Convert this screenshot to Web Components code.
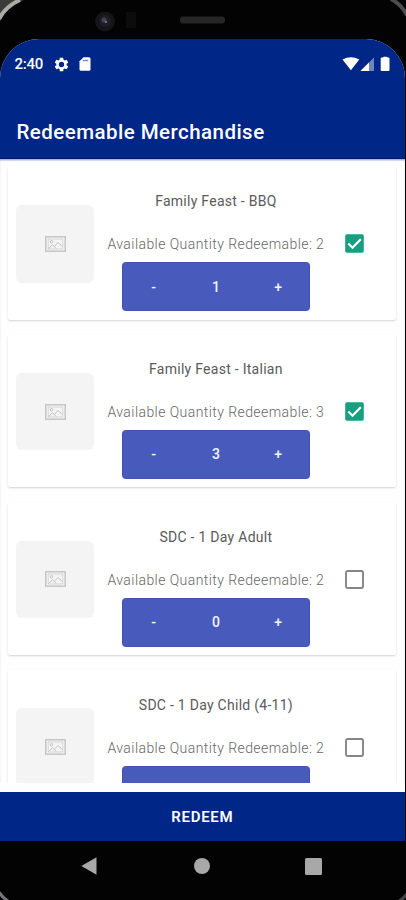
<!DOCTYPE html>
<html lang="en">
<head>
<meta charset="utf-8">
<title>Redeemable Merchandise</title>
<style>
html,body{margin:0;height:100%;background:#030304;overflow:hidden}
body{font-family:Roboto,"Noto Sans",sans-serif}
</style>
</head>
<body>
<phone-shell>
  <status-bar time="2:40"></status-bar>
  <app-header>Redeemable Merchandise</app-header>
  <merch-list>
    <merch-card available="2" count="1" checked>Family Feast - BBQ</merch-card>
    <merch-card available="3" count="3" checked>Family Feast - Italian</merch-card>
    <merch-card available="2" count="0">SDC - 1 Day Adult</merch-card>
    <merch-card available="2">SDC - 1 Day Child (4-11)</merch-card>
  </merch-list>
  <redeem-button>REDEEM</redeem-button>
  <nav-bar slot="nav"></nav-bar>
</phone-shell>
<script>
function define(name, render) {
  customElements.define(name, class extends HTMLElement {
    connectedCallback() {
      if (this.shadowRoot) return;
      this.attachShadow({mode: 'open'}).innerHTML = render(this);
    }
  });
}

define('phone-shell', () => `
<style>
:host{display:flex;flex-direction:column;position:relative;width:406px;height:900px;background:#030304;overflow:hidden}
.bezel{height:38.5px;flex:none;box-sizing:border-box}
.screen{width:404.7px;height:802.5px;flex:none;display:flex;flex-direction:column;background:#fefefe;border-radius:39px 39px 0 0;overflow:hidden}
svg{position:absolute;left:0;top:0;pointer-events:none}
</style>
<div class="bezel"></div>
<div class="screen"><slot></slot></div>
<slot name="nav"></slot>
<svg width="406" height="900" viewBox="0 0 406 900" fill="none">
  <path d="M0 0H24Q8 5 0 21Z" fill="#3b3b39"/>
  <path d="M-1 19Q6 6 20 0" stroke="#aaaaa5" stroke-width="4"/>
  <path d="M391-1Q401 4 407 15" stroke="#4c4c4e" stroke-width="4"/>
  <path d="M-1 892Q3 898 8 901" stroke="#77777a" stroke-width="3"/>
  <path d="M399 901Q404 898 407 894" stroke="#444447" stroke-width="3"/>
  <circle cx="105" cy="21.500" r="10" fill="#151517"/>
  <circle cx="105" cy="21" r="6" fill="#1e1d26"/>
  <circle cx="104" cy="20" r="2.500" fill="#454351"/>
  <circle cx="106" cy="22" r="1" fill="#8888a0"/>
  <rect x="126" y="12" width="10" height="16" fill="#0c0c0d"/>
  <rect x="180" y="16.500" width="45" height="7" rx="3" fill="#262627"/>
</svg>`);

define('status-bar', el => `
<style>
:host{display:flex;align-items:center;height:51px;flex:none;background:#002688;color:#fff;padding:0 15px 0 14.500px}
span{font-size:15px;font-weight:500;line-height:18px;letter-spacing:-.25px;width:40px}
.g{margin-left:auto}
svg{display:block}
</style>
<span>${el.getAttribute('time')}</span>
<svg width="15" height="15" viewBox="1.500 1.500 21 21" fill="#fff" style="margin-left:-1px"><path d="M19.140 12.940c.04-.3.060-.61.060-.94s-.02-.64-.07-.94l2.030-1.580a.49.49 0 0 0 .12-.61l-1.920-3.320a.488.488 0 0 0-.59-.22l-2.390.96c-.5-.38-1.030-.7-1.620-.94l-.36-2.540a.484.484 0 0 0-.48-.41h-3.840c-.24 0-.43.17-.47.41l-.36 2.540c-.59.24-1.130.57-1.620.94l-2.390-.96c-.22-.08-.47 0-.59.22L2.740 8.870c-.12.21-.08.47.12.61l2.030 1.580c-.05.3-.09.63-.09.94s.02.64.07.94l-2.030 1.580a.49.49 0 0 0-.12.61l1.920 3.320c.12.22.37.29.59.22l2.390-.96c.5.38 1.030.7 1.620.94l.36 2.540c.05.24.24.41.48.41h3.840c.24 0 .44-.17.47-.41l.36-2.540c.59-.24 1.130-.56 1.620-.94l2.390.96c.22.08.47 0 .59-.22l1.920-3.320a.49.49 0 0 0-.12-.61z"/><circle cx="12" cy="12" r="3.700" fill="#002688"/></svg>
<svg width="12" height="14" viewBox="0 0 12 14" style="margin-left:10px"><path d="M4.500.2H10q1.500 0 1.500 1.500v10.600q0 1.500-1.500 1.500H2Q.5 13.800.5 12.300V4.200z" fill="#fff"/><path d="M3.700 3.500h5.600" stroke="#8090c4" stroke-width="1.300"/></svg>
<svg class="g" width="48" height="16" viewBox="0 0 48 16"><path d="M.5 3.500Q9 -1 17.300 3.500L8.900 14.200z" fill="#fff"/><path d="M18.500 15 32 1.500V15z" fill="#6f86bd"/><path d="M18.500 15 27 6.500V15z" fill="#fff"/><path d="M41 1.500q0-.8.8-.8h2.900q.8 0 .8.8h1q1 0 1 1V14q0 1-1 1H39.700q-1 0-1-1V2.500q0-1 1-1z" fill="#fff"/></svg>`);

define('app-header', () => `
<style>
:host{display:flex;align-items:center;box-sizing:border-box;height:69.500px;flex:none;padding:17px 16.500px 0;background:#002688;color:#fff;border-bottom:1px solid #00186e;font-size:20.500px;font-weight:500;line-height:24px;letter-spacing:.46px;white-space:nowrap}
</style><slot></slot>`);

define('merch-list', () => `
<style>
:host{display:flex;flex-direction:column;gap:15.300px;box-sizing:border-box;height:624px;flex:none;padding:8px 8.500px 0 8px;overflow:hidden;background:#fefefe;box-shadow:inset 0 1.500px 1px #aab1d8}
</style><slot></slot>`);

define('merch-card', el => `
<style>
:host{display:grid;grid-template-columns:77.500px 244px 19px;align-items:center;flex:none;box-sizing:border-box;height:152.500px;padding:0 0 0 8.400px;background:#fff;border-radius:2px;box-shadow:0 1px 2px rgba(0,0,0,.17)}
.thumb{height:77.500px;border-radius:6px;background:#f4f4f4;display:flex;align-items:center;justify-content:center;margin-top:1px}
.info{display:flex;flex-direction:column;align-items:center;height:152.500px}
.title{margin-top:24.300px;font-size:14px;line-height:20px;color:#5a5a5a;letter-spacing:.27px;white-space:nowrap}
.avail{margin-top:22.900px;font-size:14px;line-height:20px;font-weight:300;color:#666;letter-spacing:.43px;white-space:nowrap}
qty-stepper{margin-top:8px}
tick-box{margin:.8px 0 0 6.800px}
</style>
<div class="thumb"><svg width="21" height="16" viewBox="0 0 21 16" fill="none" stroke="#c2c2c2"><rect x=".8" y=".8" width="19.400" height="14.400" stroke-width="1.400"/><rect x="3.200" y="3" width="14.600" height="10" stroke="#d0d0d0" stroke-width=".8"/><circle cx="6.500" cy="5.800" r="1.200"/><path d="M3.500 12.500 7.500 8.800 9.300 10.500 13 6.500 17.500 10.500M9.300 10.500l2 2"/></svg></div>
<div class="info">
  <div class="title"><slot></slot></div>
  <div class="avail">Available Quantity Redeemable: ${el.getAttribute('available')}</div>
  <qty-stepper ${el.hasAttribute('count') ? `value="${el.getAttribute('count')}"` : ''}></qty-stepper>
</div>
<tick-box ${el.hasAttribute('checked') ? 'checked' : ''}></tick-box>`);

define('qty-stepper', el => `
<style>
:host{display:grid;grid-template-columns:repeat(3,1fr);align-items:center;justify-items:center;width:188.500px;height:49px;box-sizing:border-box;border-radius:3.500px;background:#485abb;border:1px solid #4051b6;color:#f2f4ff;font-size:14px;font-weight:500;line-height:20px}
</style>${el.hasAttribute('value') ? `<span>-</span><span>${el.getAttribute('value')}</span><span>+</span>` : ''}`);

define('tick-box', el => `
<style>:host{display:block;width:19px;height:19px}svg{display:block}</style>
<svg width="19" height="19" viewBox="0 0 19 19" fill="none">${el.hasAttribute('checked')
  ? '<rect x=".2" y=".2" width="18.600" height="18.600" rx="1.800" fill="#169f80"/><path d="M3.300 9.500 7.500 13.700 15.800 5.300" stroke="#fff" stroke-width="2.200"/>'
  : '<rect x="1" y="1" width="17" height="17" rx="1.800" stroke="#858585" stroke-width="1.900"/>'}</svg>`);

define('redeem-button', () => `
<style>
:host{display:flex;align-items:center;justify-content:center;height:49.500px;flex:none;margin-top:auto;background:#002688;color:#fff;font-size:15px;font-weight:600;line-height:20px;letter-spacing:.7px;padding-top:1px;box-sizing:border-box}
</style><slot></slot>`);

define('nav-bar', () => `
<style>
:host{display:grid;grid-template-columns:repeat(3,111.500px);justify-content:center;justify-items:center;align-items:center;height:50px;width:404px}
svg{display:block}
svg:first-of-type{margin-right:3px}
</style>
<svg width="16" height="18" viewBox="0 0 16 18"><path d="M15.500.3V17.700L.3 9z" fill="#a8a8a8"/></svg>
<svg width="16" height="16" viewBox="0 0 16 16"><circle cx="8" cy="8" r="8" fill="#a8a8a8"/></svg>
<svg width="17" height="17" viewBox="0 0 17 17"><rect width="17" height="17" rx="1.500" fill="#a8a8a8"/></svg>`);
</script>
</body>
</html>
